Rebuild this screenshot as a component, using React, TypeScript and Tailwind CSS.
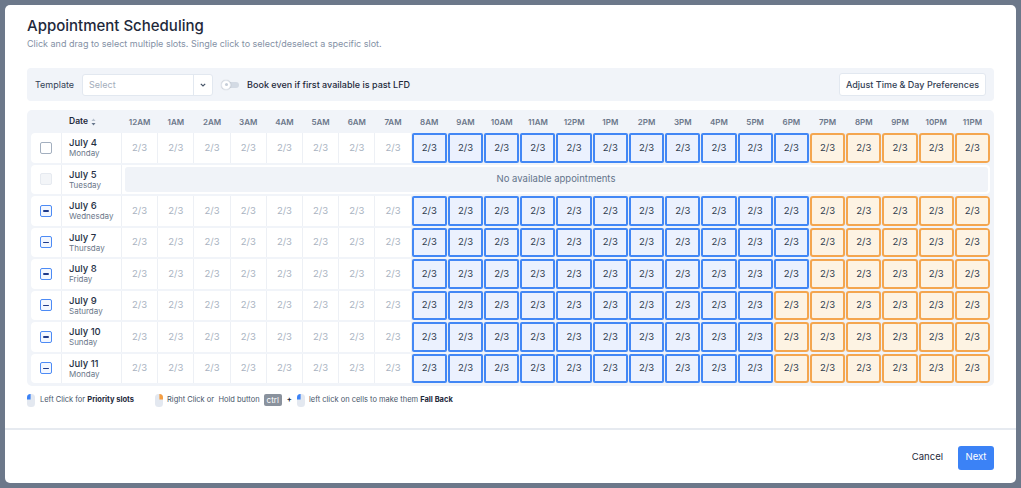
import React from "react";

const hours = [
  "12AM","1AM","2AM","3AM","4AM","5AM","6AM","7AM","8AM","9AM","10AM","11AM",
  "12PM","1PM","2PM","3PM","4PM","5PM","6PM","7PM","8PM","9PM","10PM","11PM",
];

type Row = {
  date: string;
  day: string;
  check: "empty" | "disabled" | "ind";
  none?: boolean;
  orangeStart?: number;
};

const rows: Row[] = [
  { date: "July 4", day: "Monday", check: "empty", orangeStart: 19 },
  { date: "July 5", day: "Tuesday", check: "disabled", none: true },
  { date: "July 6", day: "Wednesday", check: "ind", orangeStart: 19 },
  { date: "July 7", day: "Thursday", check: "ind", orangeStart: 19 },
  { date: "July 8", day: "Friday", check: "ind", orangeStart: 19 },
  { date: "July 9", day: "Saturday", check: "ind", orangeStart: 18 },
  { date: "July 10", day: "Sunday", check: "ind", orangeStart: 18 },
  { date: "July 11", day: "Monday", check: "ind", orangeStart: 18 },
];

const gridCols = "grid grid-cols-[30px_59px_repeat(24,minmax(0,1fr))] gap-x-px";

function Checkbox({ kind }: { kind: Row["check"] }) {
  if (kind === "empty")
    return <div className="w-[12px] h-[12px] rounded-[2px] border-[1.5px] border-[#a3afbf] bg-white" />;
  if (kind === "disabled")
    return <div className="w-[12px] h-[12px] rounded-[2px] border border-[#e6eaf0] bg-[#f3f5f8]" />;
  return (
    <div className="w-[12px] h-[12px] rounded-[2px] border-[1.5px] border-[#4d8bf5] bg-[#f3f7ff] flex items-center justify-center">
      <div className="w-[6px] h-[1.5px] bg-[#1e3a8a] rounded-full" />
    </div>
  );
}

function Mouse({ side }: { side: "left" | "right" }) {
  return (
    <svg width="8" height="13" viewBox="0 0 8 13" className="shrink-0">
      <rect x="0" y="0" width="8" height="13" rx="3.5" fill="#e3e8f0" />
      {side === "left" ? (
        <path d="M3.6 0 A3.6 3.6 0 0 0 0 3.6 V5.6 H3.6 Z" fill="#3b82f6" />
      ) : (
        <path d="M4.4 0 A3.6 3.6 0 0 1 8 3.6 V5.6 H4.4 Z" fill="#f59e42" />
      )}
    </svg>
  );
}

function Toggle() {
  return (
    <div className="relative w-[18px] h-[10px] shrink-0">
      <div className="absolute right-0 top-[2px] w-[14px] h-[6px] rounded-full bg-[#d3dae4]" />
      <div className="absolute left-0 top-0 w-[10px] h-[10px] rounded-full bg-white border border-[#e2e8f0] shadow-[0_0_1px_rgba(0,0,0,0.25)] flex items-center justify-center">
        <div className="w-[3px] h-[3px] rounded-full bg-[#c5cdd8]" />
      </div>
    </div>
  );
}

function HourCell({ h, orangeStart }: { h: number; orangeStart: number }) {
  if (h >= 8 && h < orangeStart)
    return (
      <div className="bg-[#ebf1fe] border-2 border-[#4287f5] rounded-[2px] flex items-center justify-center text-[9.5px] text-[#2f3b4d]">
        2/3
      </div>
    );
  if (h >= orangeStart)
    return (
      <div className="bg-[#fdf3e3] border-2 border-[#f4a64f] rounded-[3px] flex items-center justify-center text-[9.5px] text-[#2f3b4d]">
        2/3
      </div>
    );
  return (
    <div className="bg-white flex items-center justify-center text-[9.5px] text-[#a9b3c1]">2/3</div>
  );
}

export default function App() {
  return (
    <div
      className="w-[1021px] h-[488px] bg-[#6c788a] p-[5px]"
      style={{ fontFamily: "Inter, 'Noto Sans', sans-serif" }}
    >
      <div className="w-[1011px] h-[478px] bg-white rounded-[5px] flex flex-col overflow-hidden">
        <div className="px-[22px] pt-[11px] flex-1">
          <h1 className="text-[15px] leading-[20px] font-medium text-[#1e293b]">Appointment Scheduling</h1>
          <p className="mt-[2px] text-[9px] leading-[12px] text-[#8491a5]">
            Click and drag to select multiple slots. Single click to select/deselect a specific slot.
          </p>

          {/* template bar */}
          <div className="mt-[18px] h-[33px] bg-[#f1f4f9] rounded-[4px] flex items-center px-[8px]">
            <span className="text-[9px] text-[#334155]">Template</span>
            <div className="ml-[8px] w-[131px] h-[22px] bg-white border border-[#e2e8f0] rounded-[3px] flex items-stretch">
              <div className="flex-1 flex items-center pl-[6px] text-[9px] text-[#a3adbb]">Select</div>
              <div className="w-[19px] border-l border-[#e2e8f0] flex items-center justify-center">
                <svg width="6" height="4" viewBox="0 0 6 4">
                  <path d="M0.8 0.8 L3 3 L5.2 0.8" stroke="#475569" strokeWidth="1.2" fill="none" />
                </svg>
              </div>
            </div>
            <div className="ml-[8px]">
              <Toggle />
            </div>
            <span className="ml-[8px] text-[9px] font-medium text-[#1e293b]">
              Book even if first available is past LFD
            </span>
            <button className="ml-auto h-[23px] w-[147px] bg-white border border-[#e2e8f0] rounded-[3px] text-[9px] font-medium text-[#334155] flex items-center justify-center">
              Adjust Time &amp; Day Preferences
            </button>
          </div>

          {/* table */}
          <div className="mt-[9px] bg-[#f1f4f9] rounded-[5px] px-[4px] pb-[3px]">
            <div className={`${gridCols} h-[23px] items-center`}>
              <div />
              <div className="pl-[7px] flex items-center gap-[3px] text-[8.5px] font-semibold text-[#1e293b]">
                Date
                <svg width="5" height="8" viewBox="0 0 5 8">
                  <path d="M2.5 0.5 L4.5 3 H0.5 Z" fill="#b6c0cd" />
                  <path d="M2.5 7.5 L4.5 5 H0.5 Z" fill="#64748b" />
                </svg>
              </div>
              {hours.map((h) => (
                <div key={h} className="text-center text-[8px] font-semibold text-[#6b778a]">
                  {h}
                </div>
              ))}
            </div>
            <div className="flex flex-col gap-[2px]">
              {rows.map((r) => (
                <div key={r.date} className={`${gridCols} h-[29.5px] bg-[#edf0f5] rounded-[4px] overflow-hidden`}>
                  <div className="bg-white flex items-center justify-center">
                    <Checkbox kind={r.check} />
                  </div>
                  <div className="bg-white pl-[7px] flex flex-col justify-center">
                    <div className="text-[9.5px] leading-[11px] font-medium text-[#253044]">{r.date}</div>
                    <div className="text-[8px] leading-[10px] text-[#6b778a]">{r.day}</div>
                  </div>
                  {r.none ? (
                    <div className="col-span-24 bg-white p-[2.5px]">
                      <div className="h-full bg-[#f0f3f8] rounded-[3px] flex items-center justify-center text-[9.5px] text-[#64748b]">
                        No available appointments
                      </div>
                    </div>
                  ) : (
                    hours.map((h, i) => <HourCell key={h} h={i} orangeStart={r.orangeStart ?? 24} />)
                  )}
                </div>
              ))}
            </div>
          </div>

          {/* legend */}
          <div className="mt-[7px] h-[14px] flex items-center text-[7.5px] text-[#475569]">
            <Mouse side="left" />
            <span className="ml-[5px]">
              Left Click for <b className="font-bold text-[#1e293b]">Priority slots</b>
            </span>
            <span className="ml-[21px]">
              <Mouse side="right" />
            </span>
            <span className="ml-[4px]">Right Click or&nbsp; Hold button</span>
            <span className="ml-[4px] h-[12px] px-[3px] rounded-[2px] bg-[#8a929d] text-white flex items-center text-[8px]">ctrl</span>
            <span className="ml-[5px] font-bold text-[#1e293b]">+</span>
            <span className="ml-[5px]">
              <Mouse side="left" />
            </span>
            <span className="ml-[4px]">
              left click on cells to make them <b className="font-bold text-[#1e293b]">Fall Back</b>
            </span>
          </div>
        </div>

        {/* footer */}
        <div className="h-[2px] bg-[#e6eaf0]" />
        <div className="h-[53px] shrink-0 flex items-center justify-end px-[22px] pt-[2px] gap-[15px]">
          <button className="text-[9.5px] text-[#1e293b]">Cancel</button>
          <button className="h-[24px] w-[36px] rounded-[3px] bg-[#3b82f6] text-white text-[9.5px]">Next</button>
        </div>
      </div>
    </div>
  );
}
